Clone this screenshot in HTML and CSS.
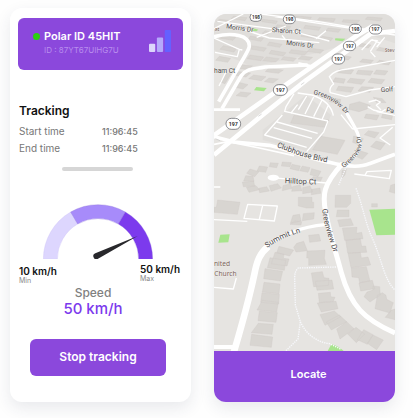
FILE: index.html
```html
<!DOCTYPE html>
<html lang="en">
<head>
<meta charset="utf-8">
<meta name="viewport" content="width=device-width, initial-scale=1">
<title>Tracking</title>
<link rel="stylesheet" href="styles.css">
</head>
<body>
<main class="screens">
  <section class="card tracker">
    <header class="device">
      <span class="status"></span>
      <div class="device-text">
        <h1 class="device-name">Polar ID 45HIT</h1>
        <p class="device-id">ID : 87YT67UIHG7U</p>
      </div>
      <svg class="signal" viewBox="0 0 67 67" aria-hidden="true">
        <rect x="0" y="42" width="19" height="25" rx="3" fill="#dcd5fb"/>
        <rect x="24" y="23" width="19" height="44" rx="3" fill="#b5aafb"/>
        <rect x="48" y="0" width="19" height="67" rx="3" fill="#6560ff"/>
      </svg>
    </header>
    <div class="details">
      <h2 class="title">Tracking</h2>
      <dl class="times">
        <dt>Start time</dt><dd>11:96:45</dd>
        <dt>End time</dt><dd>11:96:45</dd>
      </dl>
    </div>
    <hr class="divider">
    <svg class="gauge" viewBox="0 0 330 166" aria-hidden="true">
      <g stroke="#8d71d8" stroke-width="1">
        <path fill="#ddd6fe" d="M1 166A164 164 0 0 1 83 24L104 60A122 122 0 0 0 43 166Z" stroke="#c9bdf6"/>
        <path fill="#a78bfa" d="M83 24A164 164 0 0 1 247 24L226 60A122 122 0 0 0 104 60Z"/>
        <path fill="#7c3aed" d="M247 24A164 164 0 0 1 329 166L287 166A122 122 0 0 0 226 60Z"/>
      </g>
      <path fill="#28282c" d="M284 96L165 164A9 9 0 1 1 157 148Z"/>
    </svg>
    <div class="limits">
      <p class="limit limit-min"><b>10 km/h</b><small>Min</small></p>
      <p class="limit"><b>50 km/h</b><small>Max</small></p>
    </div>
    <p class="speed"><span>Speed</span><strong>50 km/h</strong></p>
    <button class="stop" type="button">Stop tracking</button>
  </section>

  <section class="card locator">
    <svg class="map" viewBox="24 42 543 1011" role="img" aria-label="Street map">
      <defs>
        <path id="green-top" d="M322 283Q390 296 424 350"/>
        <path id="green-mid" d="M413 504C450 475 475 445 465 419Q460 400 452 370"/>
        <path id="green-low" d="M349 627C353 680 370 715 391 785"/>
        <path id="club" d="M212 441C260 458 290 475 385 491"/>
        <path id="summit" d="M184 744Q220 713 310 690"/>
      </defs>
      <rect x="24" y="42" width="543" height="1011" fill="#e6e4e1"/>

      <path class="land" d="M24 42H567V130L500 108L330 160L140 200L24 150Z"/>
      <path class="land" d="M170 390L300 285L375 345L330 460L170 420Z"/>

      <path class="park" d="M490 629L567 626V704L511 706Z"/>
      <path class="park" d="M43 704L71 703L67 727L37 728Z"/>
      <path class="park" d="M376 1033Q398 1038 413 1053H365Z"/>
      <path class="park" d="M151 261L182 264L174 274L144 271Z"/>
      <path class="park" d="M140 84L157 89L151 94L137 92ZM388 115L418 116L410 124L387 121Z"/>

      <path class="building" d="M40 58l36 4-8 8-36-5zM83 49l40 4-6 9-42-6zM170 58l44 5-4 8-43-6zM264 47l52 5-5 8-50-6zM340 53l48 3-5 9-48-5zM412 59l49 2-8 9-45-4zM484 51l45 3-6 9-45-5z
        M45 106l44 6-8 9-42-7zM133 108l39 7-7 9-37-7zM178 92l13 4-5 8-17-4zM214 74l40 5-4 7-42-5zM298 76l46 6-6 9-45-6zM366 84l38 4-7 9-37-5zM288 101l44 6-8 8-39-6zM349 109l31 5-5 8-36-5z
        M52 137l40 8-8 11-42-8zM136 137l45 7-7 10-41-7zM190 126l38 7-7 9-37-6zM196 151l44 7-9 10-42-7zM256 149l49 6-9 10-47-6zM314 145l39 5-10 10-39-6z
        M132 165l41 6-8 11-42-6zM181 171l38 5-10 10-39-4zM40 169l34 6-9 12-36-6zM100 193l39 5-12 11-39-5zM233 170l38 5-9 9-36-5zM287 168l33 4-11 9-33-4z
        M99 215l35 4-14 12-34-5zM143 225l37 5-14 12-38-6zM187 205l45 5-15 10-39-5zM98 247l28 7-15 13-28-6zM189 234l28 3-16 12-26-4zM62 219l13 3-18 29-15-5zM104 276l31 3-14 12-31-4z
        M466 130l29 5-8 9-28-5zM520 142l28 5-7 9-30-5zM410 166l26 5-9 9-28-4zM470 177l32 4-8 9-33-4zM520 181l35 5-7 9-37-5z
        M401 207l42 3-8 12-40-4zM456 211l45 2-8 13-42-4zM511 210l35 3-9 12-34-3zM388 233l30 4-5 13-33-5zM433 235l44 4-11 14-43-6zM496 235l40 4-10 13-40-5zM397 259l46 3-8 15-44-6zM467 260l36 2-11 15-36-4z
        M373 294l31 4-2 13-32-6zM431 313l29-8 33 11-10 11-24 8-30-7zM502 292l27 4 11 12-29-1zM480 342l39 4-7 14-37-6zM530 342l30 4-3 13-31-6z
        M264 346L369 360L358 382L254 369ZM345 409L417 421L394 463L320 449ZM487 392l32 6-13 16-31-10zM443 408l29 8-10 20-22-9zM510 423l28 7-15 20-29-10zM458 451l28 9-17 18-22-10z
        M193 488l24 2-5 13-22-3zM229 486l27 2-4 12-26-2zM258 493l25 5-5 14-26-6zM289 498l23 5-6 14-25-5zM317 506l28 8-9 16-24-6zM321 530l28 2-8 17-27-3z
        M160 498l25 3-6 16-26-4zM132 507l27 8-13 15-24-10zM119 527l22 2 3 15-31-1zM109 546l34-2 3 14-34 2zM121 562l29-5 10 12-31 8zM158 565l24-5 8 13-29 5zM190 557l25-6 11 13-31 10zM231 557l22-6 5 14-29 7zM260 560l22-6 6 18-31 2zM290 563l22-5 8 18-30 5zM317 568l25-4 2 16-28 4z
        M277 592h41v15h5v17h-22l-24-6zM261 646l20-3 4 20-32 7zM292 641l33-3-2 19-34 5zM267 663l20 2-2 10-33-2z
        M388 586h46v24l-12 12h-35zM394 630h35v20h-38zM395 660l39-4 8 20-41 4z
        M35 600L102 607L94 643L24 637V622H31ZM554 556l13-4v28l-17-5zM497 611h17v10h-17zM408 512l13-4-4 17-10 10z
        M409 684l44-2-2 18 16-3 4 19-55 5zM419 721l44-5 4 23 12-1 3 19-57 2zM426 760l37-3 3 17 20-3 8 24-59 8zM436 804l45-4 11 43-31 5-3-15-20-2zM459 849l40-8 7 25-42 7zM483 876l18-6 0-12 20 2 2 25-31 21-18-16zM514 886l15-8 11 8 2 12 20 10-10 31-45-13zM555 931l12-4v32l-29-7z
        M272 730l21-6 11 28-34 4-7-14zM308 706l31-3 5 20-33 4zM303 753l54-2-2 24 6 18-53 3v-22h-6zM219 739l44 11-12 18-39-10zM207 757l27 6-2 12 17 2-6 21-47-7zM192 773l47 8-4 30-51-8z
        M177 806l53 8-7 29-50-7zM174 847l48 5-3 29-50-5zM168 878l52 5-2 29-54-5zM169 901l48 6-5 29-59-6zM160 933l54 5-4 29-54-5zM157 970l45 3-4 30-62-5zM137 1003l63 8-4 31-64-6z
        M316 819l33-4 5 18 15 2-2 21-44 4zM328 844l50-4 5 27-50 4zM337 880l36-3 1 13 13 2-5 12-42 4zM334 909l56-5 6 22-50 10zM342 944l43-11 19 17-47 26zM361 966l39-21 22 20-46 25zM392 987l30-22 22 21-42 31zM425 1002l25-20 26 20-25 26zM454 1019l19-30 28 15-17 29zM484 1030l17-25 31 15-20 29z"/>

      <g class="minor">
        <path d="M24 86L112 42M34 64L260 94L370 123M206 50L567 105M166 42L338 65L480 88M64 72L190 114L340 128M152 112L240 78M282 86L280 100M238 118L228 106M360 92L330 116M467 150L496 120L514 122L493 154M493 154L508 171M498 119L524 130M536 112L512 141"/>
        <path d="M24 114L100 148L94 170L27 157M100 148L109 150M39 258L60 216"/>
        <path d="M567 181L425 207Q385 210 370 230L383 252Q368 263 373 278L420 290L492 270L567 260"/>
        <path d="M488 306L510 300L523 306L511 316L525 330M485 320L502 330L526 336L539 328"/>
        <path d="M275 279L318 285C345 294 375 310 382 347M264 281L240 320L236 334L366 363M275 314L254 340M302 288L277 329M323 291L297 342M348 300L323 350M367 315L348 359"/>
        <path d="M229 345L176 405L302 442M213 366L335 400M203 383L318 415M366 363L353 396L302 455M405 344L440 387M440 387L567 374M512 335L567 346M560 382L522 414L553 435"/>
        <path d="M445 522L550 536L556 511L483 515L477 526M200 533L360 549M24 561H43M125 613L214 618L205 663L114 655ZM170 616L160 658M24 659L124 664M24 862L82 867L91 834"/>
      </g>
      <g class="road">
        <path stroke-width="11" d="M24 110C80 96 131 105 130 139C128 154 112 173 95 206L38 305M48 326L105 228C119 205 145 208 177 201L305 195"/>
        <path stroke-width="8" d="M24 329H102M277 190L316 199"/>
        <path stroke-width="14" d="M24 406L210 275L455 105L500 78"/>
        <path stroke-width="14" d="M24 465L168 346L300 241L493 102L567 93"/>
        <path stroke-width="11" d="M24 410L85 426L190 436C250 450 306 476 370 487C420 500 460 504 490 491L567 463"/>
        <path stroke-width="10" d="M420 335C445 382 464 405 461 437C456 465 430 485 405 500"/>
        <path stroke-width="15" d="M410 490C350 555 349 585 359 637C370 700 391 760 406 818C434 919 475 958 567 999"/>
        <path stroke-width="10" d="M357 674C270 682 218 711 180 741"/>
        <path stroke-width="20" d="M187 739C161 760 153 783 145 823C130 893 115 951 81 1065"/>
        <path stroke-width="12" d="M24 1041H88"/>
        <path stroke-width="5" d="M24 433L66 425L160 444L264 467"/>
      </g>
      <ellipse cx="202" cy="533" rx="17" ry="9" fill="#fff"/>
      <g class="trail">
        <path d="M390 801L277 804Q266 812 266 835L268 915L283 965L276 1017L239 1053M283 965C300 1003 332 1026 371 1031L405 1048"/>
        <path d="M450 565C471 620 479 674 500 717C527 778 535 841 567 870M421 500L398 555"/>
      </g>
      <path class="lines" d="M157 349l10-7M285 254l10-7M28 416l14 6"/>

      <g class="street">
        <text x="236" y="550" transform="rotate(2 236 550)">Hilltop Ct</text>
        <text x="24" y="219" class="small">ham Ct</text>
        <text x="60" y="85" class="small" transform="rotate(8 60 85)">Morris Dr</text>
        <text x="197" y="96" class="small" transform="rotate(4 197 96)">Sharon Ct</text>
        <text x="240" y="134" class="small" transform="rotate(7 240 134)">Morris Dr</text>
        <text x="525" y="277" class="small" transform="rotate(-5 525 277)">Golf</text>
        <text x="540" y="335" class="small" transform="rotate(12 540 335)">Pa</text>
        <text class="small"><textPath href="#green-top">Greenview Dr</textPath></text>
        <text class="small"><textPath href="#green-mid">Greenview Dr</textPath></text>
        <text><textPath href="#green-low">Greenview Dr</textPath></text>
        <text><textPath href="#club">Clubhouse Blvd</textPath></text>
        <text><textPath href="#summit">Summit Ln</textPath></text>
      </g>
      <g class="place">
        <text x="24" y="798">nited</text>
        <text x="92" y="828" text-anchor="end">Church</text>
        <text x="536" y="157" class="tiny">Stev</text>
        <text x="26" y="93" class="tiny">at</text>
      </g>
      <g class="shield">
        <rect x="132" y="39" width="35" height="25" rx="12"/><text x="150" y="57">198</text>
        <rect x="232" y="45" width="36" height="26" rx="13"/><text x="250" y="64">198</text>
        <rect x="430" y="73" width="36" height="27" rx="13"/><text x="448" y="92">198</text>
        <rect x="490" y="75" width="37" height="27" rx="13"/><text x="508" y="94">197</text>
        <rect x="412" y="124" width="37" height="28" rx="14"/><text x="431" y="144">197</text>
        <rect x="378" y="162" width="38" height="30" rx="15"/><text x="397" y="183">197</text>
        <rect x="202" y="254" width="42" height="32" rx="16"/><text x="223" y="276" class="large">197</text>
        <rect x="60" y="355" width="44" height="33" rx="16"/><text x="82" y="378" class="large">197</text>
      </g>
    </svg>
    <button class="locate" type="button">Locate</button>
  </section>
</main>
</body>
</html>
```
FILE: styles.css
```css
* {
  box-sizing: border-box;
}

body,
h1,
h2,
p,
dl,
dd {
  margin: 0;
}

body {
  background: #fefefe;
  color: #111;
  font-family: Inter, "Liberation Sans", sans-serif;
  font-size: 9px;
}

.screens {
  display: grid;
  grid-template-columns: 1fr 1fr;
  gap: 23px;
  align-items: end;
  padding: 8px 18px 16px 10px;
}

.card {
  border-radius: 12px;
  background: #fff;
  box-shadow: 0 6px 16px rgba(40, 50, 80, 0.1);
}

button {
  border: 0;
  background: #8b48dc;
  color: #fff;
  font: 600 12px/16px Inter, "Liberation Sans", sans-serif;
}

.tracker {
  display: flex;
  flex-direction: column;
  padding: 10px 8px 26px;
}

.device {
  display: flex;
  gap: 4px;
  padding: 10px 12px 14px 15px;
  border-radius: 6px;
  background: #8b48dc;
  color: #fff;
}

.status {
  width: 7px;
  height: 7px;
  margin-top: 5px;
  border-radius: 50%;
  background: #2bd010;
}

.device-text {
  flex: 1;
}

.device-name {
  font-size: 11px;
  font-weight: 600;
  line-height: 16px;
}

.device-id {
  color: #b98eee;
  font-size: 8px;
  line-height: 12px;
}

.signal {
  width: 22px;
  height: 22px;
  margin-top: 2px;
}

.details {
  padding: 33px 1px 0;
}

.title {
  font-size: 12px;
  font-weight: 600;
  line-height: 16px;
}

.times {
  display: grid;
  grid-template-columns: 83px 1fr;
  padding-top: 4px;
  color: #777;
  line-height: 17px;
}

.times dt {
  font-size: 10px;
}

.times dd {
  font-weight: 500;
}

.divider {
  width: 71px;
  height: 4px;
  margin: 10px auto 0 44px;
  border: 0;
  border-radius: 2px;
  background: #d6d6d6;
}

.gauge {
  width: 110px;
  margin: 33px auto 0 25px;
}

.limits {
  display: flex;
  justify-content: space-between;
  padding: 4px 3px 0 1px;
}

.limit b,
.limit small {
  display: block;
}

.limit b {
  font-size: 10px;
  font-weight: 600;
  line-height: 12px;
}

.limit small {
  color: #888;
  font-size: 7px;
  line-height: 8px;
}

.limit-min {
  padding-top: 2px;
}

.speed {
  align-self: center;
  padding-right: 15px;
  color: #808080;
  font-size: 12px;
  text-align: center;
}

.speed span,
.speed strong {
  display: block;
  font-weight: 500;
  line-height: 16px;
}

.speed strong {
  color: #7c3aed;
  font-size: 15px;
}

.stop {
  margin: 22px 17px 0 12px;
  padding: 10px 0 11px;
  border-radius: 6px;
}

.locator {
  overflow: hidden;
}

.map {
  display: block;
  width: 100%;
}

.locate {
  display: block;
  width: 100%;
  padding: 15px 0 20px 8px;
  font-size: 11px;
}

.land {
  fill: #e0dedb;
}

.park {
  fill: #a8e48d;
}

.building {
  fill: #d8d5d1;
  stroke: #cdc9c5;
  stroke-width: 1;
}

.minor,
.road,
.trail,
.lines {
  fill: none;
  stroke: #fff;
  stroke-linejoin: round;
}

.minor {
  stroke-width: 4;
}

.trail {
  stroke: #f7f8fc;
  stroke-width: 4;
  stroke-dasharray: 4 3;
}

.lines {
  stroke: #c8c8c8;
  stroke-width: 2;
}

.street,
.place {
  fill: #4d4b4c;
  stroke: #f3f1ef;
  stroke-width: 2;
  paint-order: stroke;
  font-family: Roboto, sans-serif;
  font-size: 23px;
}

.street .small {
  font-size: 20px;
}

.place {
  fill: #7a6258;
  font-family: "Noto Sans", sans-serif;
  font-size: 20px;
}

.place .tiny {
  font-size: 15px;
}

.shield rect {
  fill: #fff;
  stroke: #55565c;
  stroke-width: 2;
}

.shield text {
  fill: #333;
  font-family: Roboto, sans-serif;
  font-size: 14px;
  font-weight: 700;
  text-anchor: middle;
}

.shield .large {
  font-size: 16px;
}
```
